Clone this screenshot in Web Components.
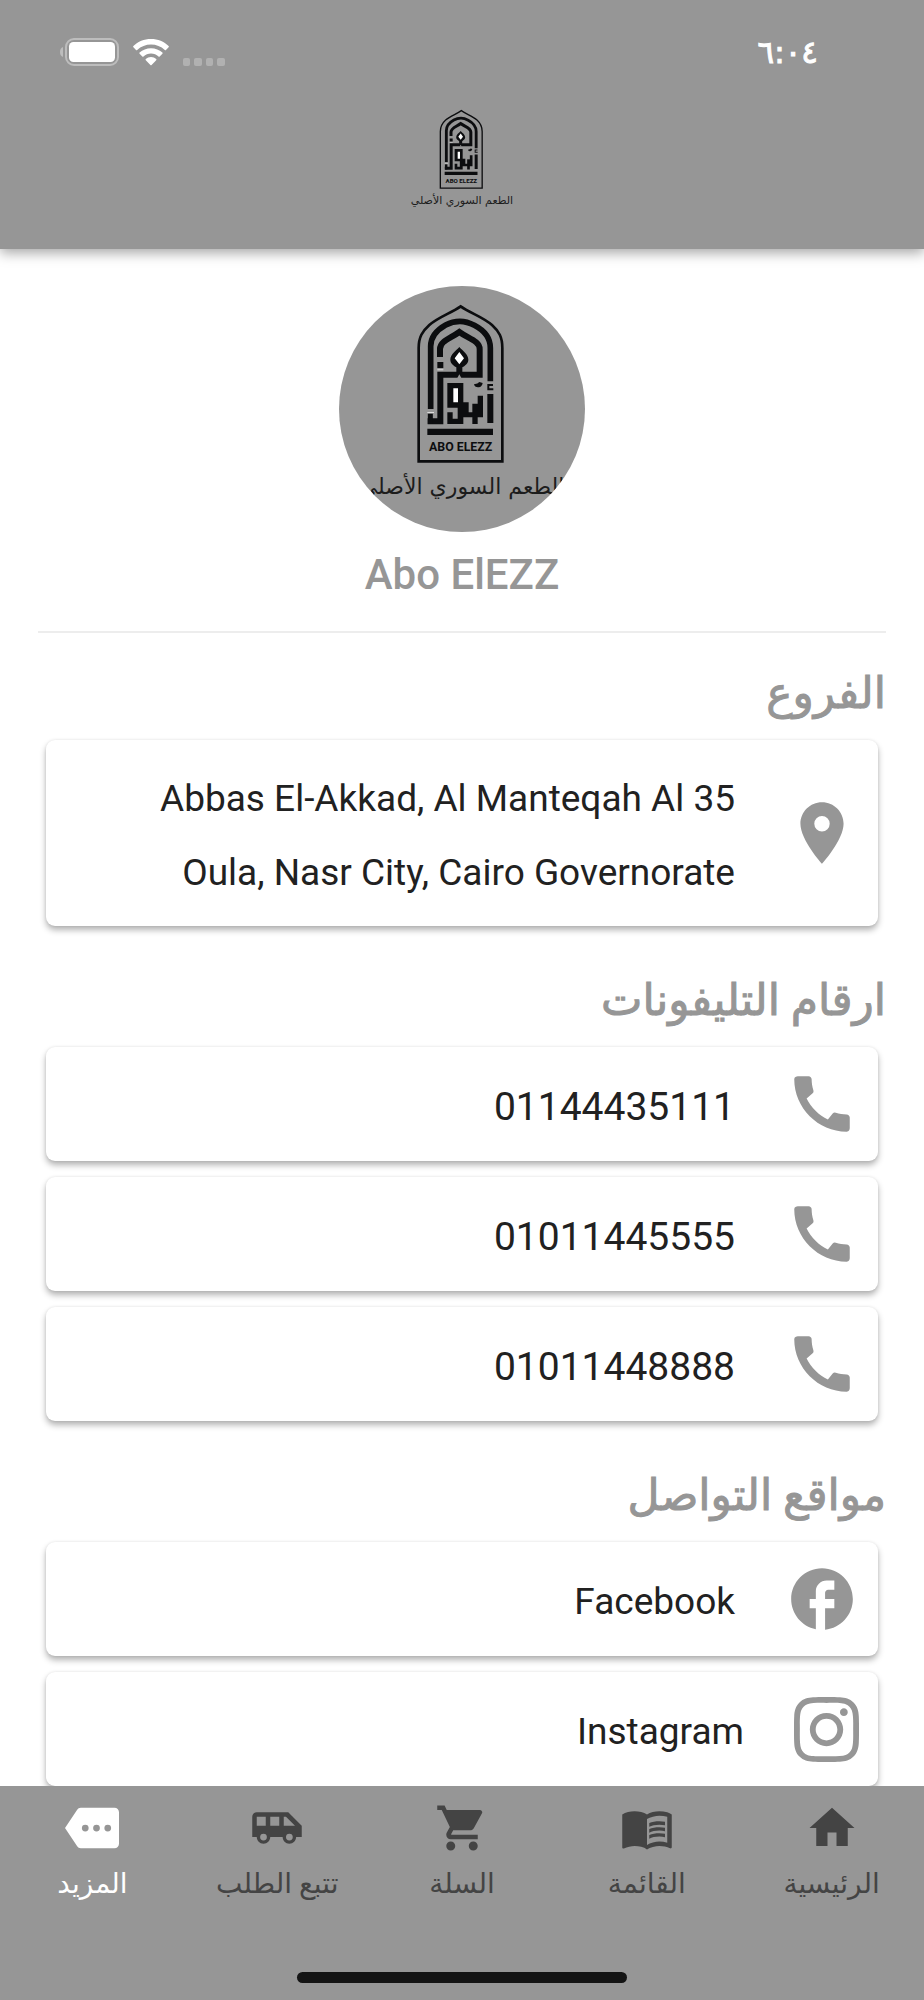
<!DOCTYPE html>
<html lang="ar" dir="rtl">
<head>
<meta charset="utf-8">
<meta name="viewport" content="width=device-width, initial-scale=1">
<title>Abo ElEZZ</title>
<style>
  body {
    margin: 0;
    background: #fff;
    color: #212121;
    font-family: Roboto, "DejaVu Sans", sans-serif;
    --brand: #969696;
    --ink: #212121;
  }
</style>
</head>
<body>
<contact-app></contact-app>

<script>
const ICONS = {
  pin: ['0 0 24 24', '<path d="M12 2C8.130 2 5 5.130 5 9c0 5.250 7 13 7 13s7-7.750 7-13c0-3.870-3.130-7-7-7zm0 9.500a2.500 2.500 0 1 1 0-5 2.500 2.500 0 0 1 0 5z"/>'],
  phone: ['0 0 24 24', '<path d="M20.010 15.380c-1.230 0-2.420-.2-3.530-.56a.977.977 0 0 0-1.010.24l-1.570 1.970c-2.830-1.350-5.480-3.900-6.890-6.830l1.950-1.660c.27-.28.35-.67.24-1.020-.37-1.110-.56-2.300-.56-3.530 0-.54-.45-.99-.99-.99H4.190C3.650 3 3 3.240 3 3.990 3 13.280 10.730 21 20.010 21c.71 0 .99-.63.99-1.180v-3.450c0-.54-.45-.99-.99-.99z"/>'],
  facebook: ['0 0 24 24', '<path d="M22 12c0-5.520-4.480-10-10-10S2 6.480 2 12c0 4.840 3.440 8.870 8 9.800V15H8v-3h2V9.500C10 7.570 11.570 6 13.500 6H16v3h-2c-.55 0-1 .45-1 1v2h3v3h-3v6.950c5.050-.5 9-4.760 9-9.950z"/>'],
  instagram: ['0 31.500 448 448', '<path d="M224.100 141c-63.600 0-114.900 51.300-114.900 114.900s51.300 114.900 114.900 114.900S339 319.500 339 255.900 287.700 141 224.100 141zm0 189.600c-41.100 0-74.700-33.500-74.700-74.700s33.500-74.700 74.700-74.700 74.700 33.500 74.700 74.700-33.600 74.700-74.700 74.700zm146.400-194.300c0 14.900-12 26.800-26.800 26.800-14.900 0-26.800-12-26.800-26.800s12-26.800 26.800-26.800 26.800 12 26.800 26.800zm76.100 27.200c-1.700-35.900-9.900-67.700-36.200-93.900-26.200-26.200-58-34.400-93.900-36.200-37-2.100-147.900-2.100-184.900 0-35.800 1.700-67.600 9.900-93.900 36.100s-34.400 58-36.200 93.900c-2.100 37-2.100 147.900 0 184.900 1.700 35.900 9.900 67.700 36.200 93.900s58 34.400 93.900 36.200c37 2.100 147.900 2.100 184.900 0 35.900-1.700 67.700-9.900 93.900-36.200 26.200-26.200 34.400-58 36.200-93.900 2.100-37 2.100-147.800 0-184.800zM398.800 388c-7.800 19.600-22.900 34.700-42.600 42.600-29.500 11.700-99.500 9-132.100 9s-102.700 2.600-132.100-9c-19.600-7.800-34.700-22.900-42.600-42.600-11.700-29.500-9-99.500-9-132.100s-2.600-102.700 9-132.100c7.800-19.600 22.900-34.700 42.600-42.600 29.500-11.700 99.500-9 132.100-9s102.700-2.600 132.100 9c19.600 7.800 34.700 22.900 42.600 42.600 11.700 29.500 9 99.500 9 132.100s2.700 102.700-9 132.100z"/>'],
  home: ['0 0 24 24', '<path d="M10 20v-6h4v6h5v-8h3L12 3 2 12h3v8z"/>'],
  menu: ['0 0 24 24', '<path d="M21 5c-1.110-.35-2.330-.5-3.500-.5-1.950 0-4.050.4-5.500 1.500-1.450-1.100-3.550-1.500-5.500-1.500S2.450 4.900 1 6v14.650c0 .25.25.5.5.5.1 0 .15-.05.25-.05C3.100 20.450 5.050 20 6.500 20c1.950 0 4.050.4 5.500 1.500 1.350-.85 3.800-1.500 5.500-1.500 1.650 0 3.350.3 4.750 1.050.1.050.15.050.25.050.25 0 .5-.25.5-.5V6c-.6-.45-1.250-.75-2-1zm0 13.500c-1.100-.35-2.300-.5-3.500-.5-1.700 0-4.150.65-5.500 1.500V8c1.350-.85 3.800-1.500 5.500-1.500 1.200 0 2.400.15 3.500.5v11.500z"/><path d="M17.500 10.500c.88 0 1.730.09 2.500.26V9.240c-.79-.15-1.640-.24-2.500-.24-1.700 0-3.240.29-4.500.83v1.660c1.130-.64 2.700-.99 4.500-.99zM13 12.490v1.660c1.130-.64 2.700-.99 4.500-.99.88 0 1.730.09 2.500.26V11.900c-.79-.15-1.640-.24-2.500-.24-1.700 0-3.240.3-4.500.83zM17.500 14.330c-1.700 0-3.240.29-4.500.83v1.660c1.130-.64 2.700-.99 4.500-.99.88 0 1.730.09 2.500.26v-1.520c-.79-.16-1.640-.24-2.500-.24z"/>'],
  cart: ['0 0 24 24', '<path d="M7 18c-1.100 0-1.990.9-1.990 2S5.900 22 7 22s2-.9 2-2-.9-2-2-2zM1 2v2h2l3.600 7.590-1.350 2.450c-.16.28-.25.61-.25.96 0 1.100.9 2 2 2h12v-2H7.420c-.14 0-.25-.11-.25-.25l.03-.12.9-1.630h7.450c.75 0 1.410-.41 1.750-1.030l3.580-6.490c.08-.14.12-.31.12-.48 0-.55-.45-1-1-1H5.210l-.94-2H1zm16 16c-1.100 0-1.990.9-1.990 2s.89 2 1.990 2 2-.9 2-2-.9-2-2-2z"/>'],
  van: ['0 0 24 24', '<path d="M17 5H3a2 2 0 0 0-2 2v9h2c0 1.650 1.340 3 3 3s3-1.350 3-3h5.500c0 1.650 1.340 3 3 3s3-1.350 3-3H23v-5l-6-6zM3 11V7h4v4H3zm3 6.500a1.500 1.500 0 1 1 0-3 1.500 1.500 0 0 1 0 3zm7-6.500H9V7h4v4zm4.500 6.500a1.500 1.500 0 1 1 0-3 1.500 1.500 0 0 1 0 3zM15 11V7h1l4 4h-5z"/>'],
  more: ['0 0 24 24', '<path d="M22 3H7c-.69 0-1.230.35-1.590.88L0 12l5.410 8.110c.36.53.9.890 1.590.890h15c1.100 0 2-.9 2-2V5c0-1.100-.9-2-2-2zM9 13.500a1.500 1.500 0 1 1 0-3 1.500 1.500 0 0 1 0 3zm5 0a1.500 1.500 0 1 1 0-3 1.500 1.500 0 0 1 0 3zm5 0a1.500 1.500 0 1 1 0-3 1.500 1.500 0 0 1 0 3z"/>']
};

const define = (name, render) => customElements.define(name, class extends HTMLElement {
  connectedCallback() {
    if (!this.shadowRoot) this.attachShadow({ mode: 'open' }).innerHTML = render(this);
  }
});

define('app-icon', host => {
  const [box, body] = ICONS[host.getAttribute('name')];
  return `
  <style>
    :host { display: block; flex: none; width: var(--icon-size, 54px); height: var(--icon-size, 54px); }
    svg { display: block; width: 100%; height: 100%; fill: currentColor; }
  </style>
  <svg viewBox="${box}" aria-hidden="true">${body}</svg>`;
});

define('brand-logo', () => `
  <style>
    :host { display: block; width: 104px; }
    :host([large]) { width: 208px; }
    svg { display: block; width: 100%; }
    text { fill: #0c0d0f; text-anchor: middle; }
    .latin { font: bold 37px Roboto, sans-serif; }
    .tagline { font: 66px "DejaVu Sans", sans-serif; fill: #1c1c1c; }
  </style>
  <svg viewBox="84 70 624 612" role="img" aria-label="Abo Elezz">
    <g fill="none" stroke="#0c0d0f">
      <path stroke-width="8" d="M266 545V205C266 172 277 155 298 136C325 112 362 101 392 80C422 101 459 112 486 136C507 155 517 172 517 205V545Z"/>
      <path stroke-width="17" d="M302 388V200C302 168 322 150 347 136C362 128 378 125 390 125C402 125 418 129 433 137C460 151 481 170 481 205V305"/>
      <path stroke-width="18" d="M330 232V208C330 184 362 176 388 157C414 176 449 184 449 208V285H331V425H293"/>
      <path stroke-width="15" d="M301 433V402"/>
    </g>
    <g fill="#0c0d0f">
      <path d="M322 247h18v18h-18z"/>
      <path d="M388 202C398 213 415 224 415 240C415 251 406 257 397 263V278H379V263C370 257 361 251 361 240C361 224 378 213 388 202Z"/>
      <path d="M352 310H400V368H416V398H427V348H443V398H443V348H459V413H443V433H427V413H400V433H352V398H368V417H383V384H352Z"/>
      <path d="M432 314q12-2 16-7l10 3q-2 12-12 13-12 1-14-9zM472 343H490V430H472zM472 313H489V319H478V326H490V332H472z"/>
      <path d="M292 447H489V466H292z"/>
    </g>
    <path fill="#969696" d="M426 340h17v32h-17z"/>
    <path fill="#fff" d="M388 217L402 236L388 254L374 236ZM370 326H384V368H370Z"/>
    <path fill="#ddd" d="M322 269h18v3h-18zM292 397h20v3h-20z"/>
    <path fill="#969696" d="M382 295L388 284L394 295Z"/>
    <text class="latin" x="392" y="513">ABO ELEZZ</text>
    <text class="tagline" x="396" y="642">الطعم السوري الأصلي</text>
  </svg>`);

define('status-bar', () => `
  <style>
    :host { display: flex; direction: ltr; justify-content: space-between; align-items: center; height: 34px; padding: 35px 106px 0 60px; color: #fff; }
    .signals { display: flex; align-items: center; gap: 14px; }
    svg { display: block; }
    time { font: 31px/34px "DejaVu Sans", sans-serif; -webkit-text-stroke: 1px #fff; }
  </style>
  <div class="signals">
    <svg width="59" height="30" viewBox="0 0 59 30" aria-hidden="true">
      <rect x="6" y="2" width="52" height="26" rx="8" fill="none" stroke="#bdbdbd" stroke-width="2"/>
      <rect x="9" y="5" width="46" height="20" rx="4.500" fill="#fff"/>
      <path d="M3 10v10q-3-1-3-5t3-5z" fill="#bdbdbd"/>
    </svg>
    <svg width="36" height="27" viewBox="0 0 36 27" fill="#fff" aria-hidden="true">
      <path d="M18 0C25 0 31 2.600 35.600 7q.6.600 0 1.200L33 11q-.6.600-1.200 0C28 7.500 23.200 5.600 18 5.600S8 7.500 4.200 11q-.6.600-1.200 0L.4 8.200q-.6-.6 0-1.200C5 2.600 11 0 18 0z"/>
      <path d="M18 9.200c4.400 0 8.400 1.700 11.400 4.400q.6.600 0 1.200l-2.700 2.700q-.6.600-1.200 0c-2-1.800-4.600-2.900-7.500-2.900s-5.500 1.100-7.500 2.900q-.6.600-1.200 0l-2.700-2.700q-.6-.6 0-1.200c3-2.700 7-4.400 11.400-4.400z"/>
      <path d="M18 18c2 0 3.800.8 5.200 2q.6.600 0 1.200l-4.600 4.700q-.6.600-1.200 0l-4.600-4.700q-.6-.6 0-1.200c1.400-1.200 3.200-2 5.200-2z"/>
    </svg>
    <svg width="43" height="30" viewBox="0 0 43 30" fill="#b1b1b1" aria-hidden="true">
      <rect x="0" y="21" width="7" height="8" rx="2"/><rect x="11" y="21" width="8" height="8" rx="2"/><rect x="23" y="21" width="7" height="8" rx="2"/><rect x="34" y="21" width="8" height="8" rx="2"/>
    </svg>
  </div>
  <time datetime="06:04">٦:٠٤</time>`);

define('app-header', () => `
  <style>
    :host { display: block; box-sizing: border-box; padding-bottom: 38px; background: var(--brand); box-shadow: 0 4px 12px rgba(0,0,0,.35); }
    brand-logo { margin: 40px auto 0; }
  </style>
  <status-bar></status-bar>
  <brand-logo></brand-logo>`);

define('profile-card', () => `
  <style>
    :host { display: block; padding: 37px 0 30px; border-bottom: 2px solid #ededed; text-align: center; }
    .avatar { box-sizing: border-box; width: 246px; height: 246px; margin: 0 auto; padding: 17px 19px 0; overflow: hidden; border-radius: 50%; background: var(--brand); }
    h1 { margin: 17px 0 0; color: var(--brand); font-size: 42px; font-weight: 500; line-height: 52px; }
  </style>
  <div class="avatar"><brand-logo large></brand-logo></div>
  <h1><slot></slot></h1>`);

define('info-section', host => `
  <style>
    :host { display: block; }
    h2 { margin: 0; padding: 31px 0 18px; color: var(--brand); font-size: 44px; font-weight: 400; line-height: 58px; -webkit-text-stroke: 1px var(--brand); }
    .list { display: flex; flex-direction: column; gap: 16px; padding: 0 8px 14px; }
    :host([last]) .list { padding-bottom: 0; }
  </style>
  <h2>${host.getAttribute('heading')}</h2>
  <div class="list"><slot></slot></div>`);

define('info-card', host => `
  <style>
    :host { display: block; --icon-size: 74px; }
    :host([icon="instagram"]) { --icon-size: 65px; }
    a { display: flex; align-items: center; gap: 50px; box-sizing: border-box; min-height: 114px; padding: 16px 19px 16px 40px; border-radius: 9px; background: #fff; color: var(--ink); text-decoration: none; box-shadow: 0 4px 6px rgba(0,0,0,.3), 0 0 3px rgba(0,0,0,.08); }
    app-icon { color: var(--brand); }
    span { flex: 1; padding-top: 6px; font-size: 37px; line-height: 74px; }
    :host([icon="phone"]) span { font-size: 39px; }
  </style>
  <a href="${host.getAttribute('href')}"><app-icon name="${host.getAttribute('icon')}"></app-icon><span><slot></slot></span></a>`);

define('nav-item', host => `
  <style>
    :host { display: block; flex: 1; color: #444; }
    :host([active]) { color: #fff; }
    a { display: flex; flex-direction: column; align-items: center; color: inherit; text-decoration: none; }
    span { margin-top: 7px; font-size: 28px; line-height: 44px; white-space: nowrap; }
  </style>
  <a href="${host.getAttribute('href')}"${host.hasAttribute('active') ? ' aria-current="page"' : ''}><app-icon name="${host.getAttribute('icon')}"></app-icon><span><slot></slot></span></a>`);

define('tab-bar', () => `
  <style>
    :host { display: flex; flex-direction: column; box-sizing: border-box; position: sticky; bottom: 0; min-height: 214px; padding: 15px 0 17px; background: var(--brand); }
    nav { display: flex; }
    .home-indicator { width: 330px; height: 11px; margin: auto auto 0; border-radius: 6px; background: #141414; }
  </style>
  <nav><slot></slot></nav>
  <div class="home-indicator"></div>`);

define('contact-app', () => `
  <style>
    :host { display: flex; flex-direction: column; min-height: 100vh; }
    app-header { position: relative; }
    main { flex: 1; padding: 0 38px; }
  </style>
  <app-header></app-header>
  <main>
    <profile-card>Abo ElEZZ</profile-card>
    <info-section heading="الفروع">
      <info-card icon="pin" href="#branch">35 Abbas El-Akkad, Al Manteqah Al Oula, Nasr City, Cairo Governorate</info-card>
    </info-section>
    <info-section heading="ارقام التليفونات">
      <info-card icon="phone" href="tel:01144435111">01144435111</info-card>
      <info-card icon="phone" href="tel:01011445555">01011445555</info-card>
      <info-card icon="phone" href="tel:01011448888">01011448888</info-card>
    </info-section>
    <info-section last heading="مواقع التواصل">
      <info-card icon="facebook" href="#facebook">Facebook</info-card>
      <info-card icon="instagram" href="#instagram">Instagram</info-card>
    </info-section>
  </main>
  <tab-bar>
    <nav-item icon="home" href="#home">الرئيسية</nav-item>
    <nav-item icon="menu" href="#menu">القائمة</nav-item>
    <nav-item icon="cart" href="#cart">السلة</nav-item>
    <nav-item icon="van" href="#track">تتبع الطلب</nav-item>
    <nav-item active icon="more" href="#more">المزيد</nav-item>
  </tab-bar>`);
</script>
</body>
</html>
